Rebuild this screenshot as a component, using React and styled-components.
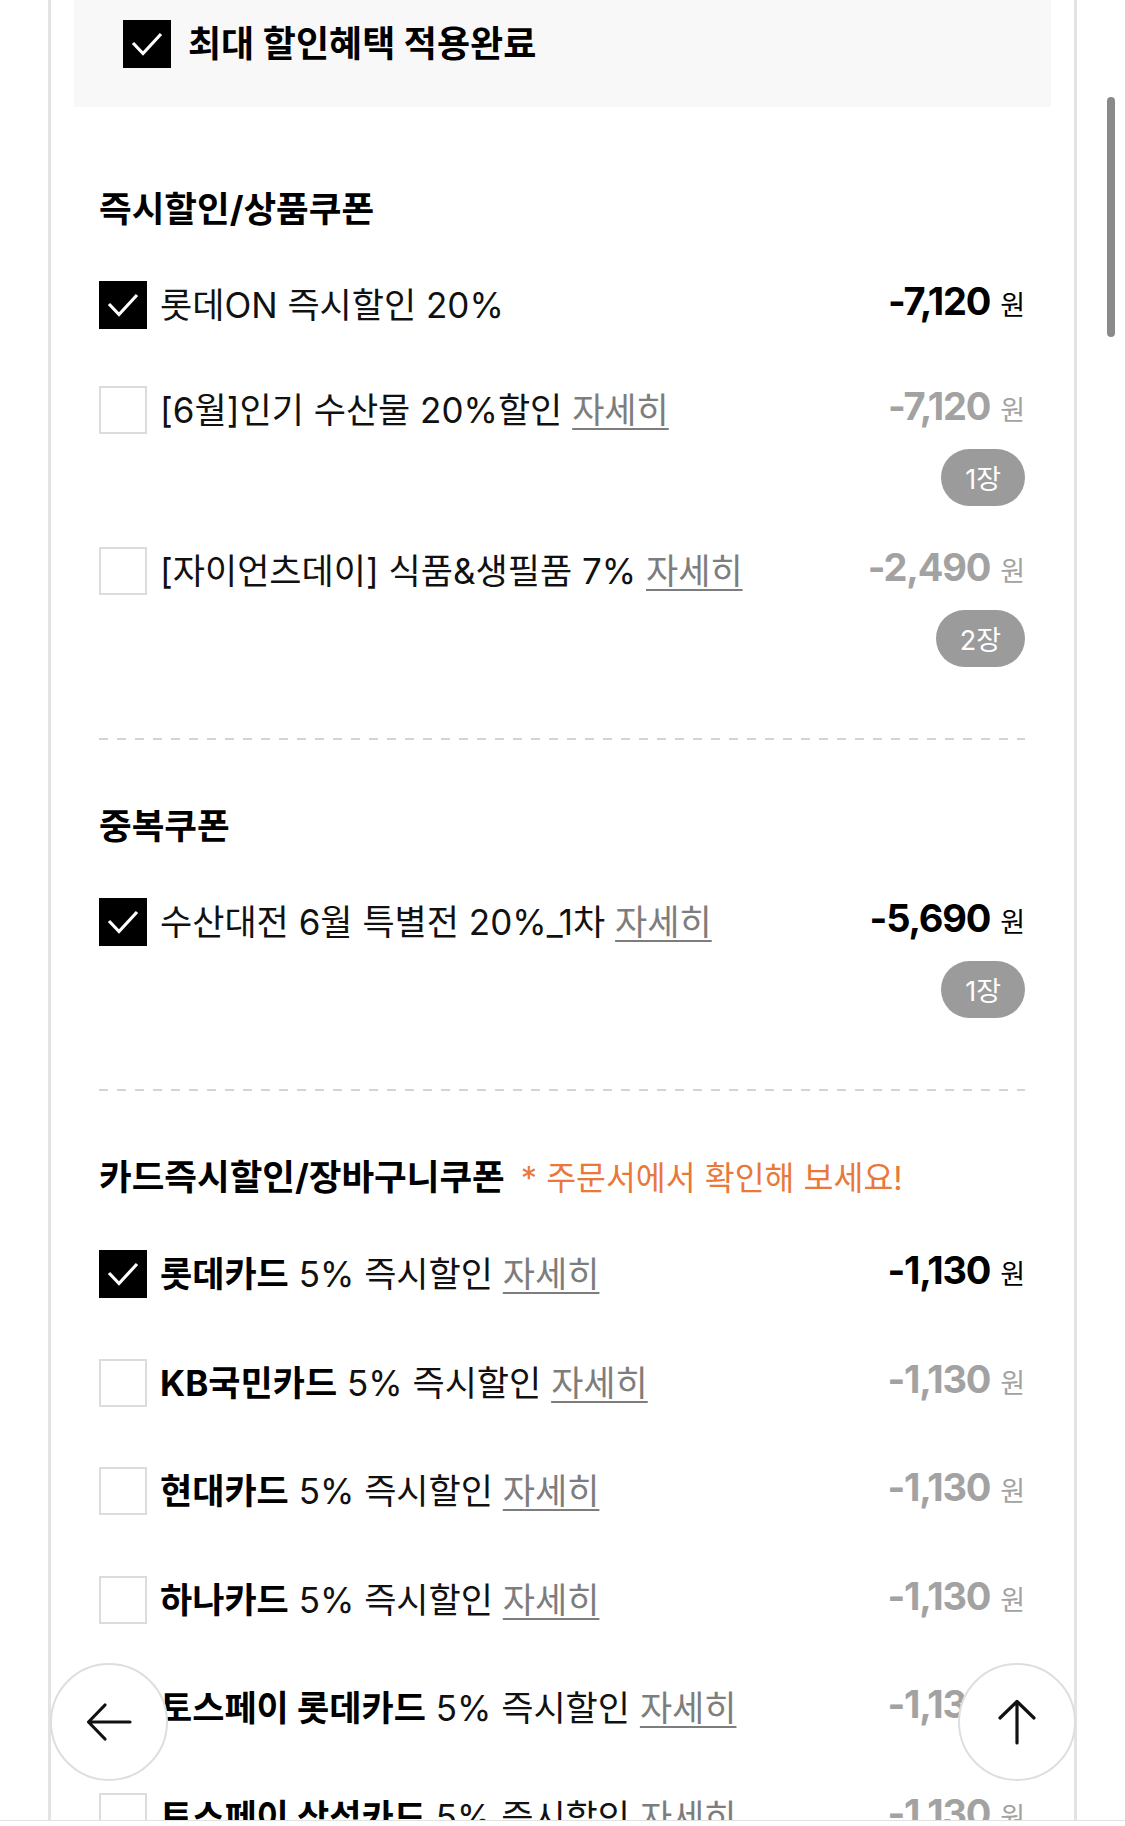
import React from "react";
import styled, { createGlobalStyle } from "styled-components";

const GlobalStyle = createGlobalStyle`
  html, body {
    margin: 0;
    padding: 0;
    background: #fff;
  }
  body {
    font-family: Inter, "Noto Sans CJK KR", sans-serif;
    color: #111;
  }
  * { box-sizing: border-box; }
`;

const coupons = [
  { id: 1, checked: true, label: "롯데ON 즉시할인 20%", price: "-7,120" },
  { id: 2, label: "[6월]인기 수산물 20%할인", link: true, price: "-7,120", count: "1장" },
  { id: 3, label: "[자이언츠데이] 식품&생필품 7%", link: true, price: "-2,490", count: "2장" },
];

const doubleCoupons = [
  { id: 4, checked: true, label: "수산대전 6월 특별전 20%_1차", link: true, price: "-5,690", count: "1장" },
];

const cards = [
  { id: 5, checked: true, brand: "롯데카드" },
  { id: 6, brand: "KB국민카드" },
  { id: 7, brand: "현대카드" },
  { id: 8, brand: "하나카드" },
  { id: 9, brand: "토스페이 롯데카드" },
  { id: 10, brand: "토스페이 삼성카드" },
];

function Check({ checked }) {
  return (
    <CheckBox $checked={checked}>
      {checked && (
        <svg width="48" height="48" viewBox="0 0 48 48">
          <polyline points="10,23 20,33.5 38,14" fill="none" stroke="#fff" strokeWidth="3.2" />
        </svg>
      )}
    </CheckBox>
  );
}

function Amount({ value, active }) {
  return (
    <Price $active={active}>
      <Num>{value}</Num>
      <Won>원</Won>
    </Price>
  );
}

function CouponRow({ item }) {
  return (
    <Item>
      <MainLine>
        <Check checked={item.checked} />
        <Label>
          {item.brand && <Strong>{item.brand}</Strong>}
          {item.label}
          {item.link && (
            <>
              {" "}
              <More>자세히</More>
            </>
          )}
        </Label>
        <Amount value={item.price} active={item.checked} />
      </MainLine>
      {item.count && <Count>{item.count}</Count>}
    </Item>
  );
}

export default function App() {
  return (
    <>
      <GlobalStyle />
      <Viewport>
        <Panel>
          <MaxBenefit>
            <Check checked />
            <MaxTitle>최대 할인혜택 적용완료</MaxTitle>
          </MaxBenefit>

          <Section $top={79}>
            <SectionTitle>즉시할인/상품쿠폰</SectionTitle>
            <List $gap={57}>
              {coupons.map((c) => (
                <CouponRow key={c.id} item={c} />
              ))}
            </List>
          </Section>

          <Divider />

          <Section $top={63}>
            <SectionTitle>중복쿠폰</SectionTitle>
            <List $gap={57}>
              {doubleCoupons.map((c) => (
                <CouponRow key={c.id} item={c} />
              ))}
            </List>
          </Section>

          <Divider />

          <Section $top={63}>
            <SectionTitle>
              카드즉시할인/장바구니쿠폰
              <Notice>* 주문서에서 확인해 보세요!</Notice>
            </SectionTitle>
            <List $gap={60.5}>
              {cards.map((c) => (
                <CouponRow
                  key={c.id}
                  item={{
                    ...c,
                    label: " 5% 즉시할인",
                    link: true,
                    price: "-1,130",
                  }}
                />
              ))}
            </List>
          </Section>
        </Panel>

        <ScrollThumb />

        <RoundButton $side="left" aria-label="뒤로">
          <svg width="48" height="48" viewBox="0 0 48 48">
            <path d="M45 24H4M20 7L3.5 24L20 41" fill="none" stroke="#111" strokeWidth="3.2" strokeLinecap="round" strokeLinejoin="round" />
          </svg>
        </RoundButton>
        <RoundButton $side="right" aria-label="맨 위로">
          <svg width="48" height="48" viewBox="0 0 48 48">
            <path d="M24 45V4M7 20L24 3.5L41 20" fill="none" stroke="#111" strokeWidth="3.2" strokeLinecap="round" strokeLinejoin="round" />
          </svg>
        </RoundButton>
      </Viewport>
    </>
  );
}

const Viewport = styled.div`
  position: relative;
  height: 1821px;
  overflow: hidden;
  border-bottom: 1px solid #e2e2e2;
`;

const Panel = styled.div`
  width: 1029px;
  min-height: 100%;
  margin-left: 48px;
  border-left: 3px solid #e3e3e3;
  border-right: 3px solid #e3e3e3;
`;

const MaxBenefit = styled.div`
  display: flex;
  align-items: flex-start;
  gap: 17px;
  height: 107px;
  margin: 0 23px;
  padding: 20px 0 0 49px;
  background: #f8f8f8;
`;

const MaxTitle = styled.div`
  font-size: 36px;
  font-weight: 700;
  line-height: 48px;
  color: #000;
`;

const Section = styled.section`
  padding: ${(p) => p.$top}px 49px 87px 48px;
`;

const SectionTitle = styled.h2`
  margin: 0 0 47px;
  font-size: 35.5px;
  font-weight: 700;
  line-height: 48px;
  color: #000;
  white-space: nowrap;
`;

const Notice = styled.span`
  margin-left: 16px;
  font-size: 32.5px;
  font-weight: 400;
  color: #e8793a;
`;

const Divider = styled.div`
  height: 2px;
  margin: 0 49px 0 48px;
  background: repeating-linear-gradient(to right, #d4d4d4 0 9px, transparent 9px 18px);
`;

const List = styled.div`
  display: flex;
  flex-direction: column;
  gap: ${(p) => p.$gap}px;
`;

const Item = styled.div`
  display: flex;
  flex-direction: column;
`;

const MainLine = styled.div`
  display: flex;
  align-items: center;
  height: 48px;
`;

const CheckBox = styled.span`
  flex: none;
  width: 48px;
  height: 48px;
  display: flex;
  background: ${(p) => (p.$checked ? "#000" : "#fff")};
  border: ${(p) => (p.$checked ? "none" : "2px solid #dcdcdc")};

  svg {
    display: block;
  }
`;

const Label = styled.div`
  flex: 1;
  min-width: 0;
  margin-left: 13px;
  font-size: 35px;
  line-height: 48px;
  color: #111;
  white-space: nowrap;
`;

const Strong = styled.b`
  font-weight: 700;
  color: #000;
`;

const More = styled.span`
  color: #7d7d7d;
  text-decoration: underline;
  text-decoration-thickness: 2px;
  text-underline-offset: 5px;
`;

const Price = styled.div`
  flex: none;
  white-space: nowrap;
  line-height: 48px;
  color: ${(p) => (p.$active ? "#000" : "#a2a2a2")};
`;

const Num = styled.span`
  font-size: 38px;
  font-weight: 700;
  letter-spacing: -1.2px;
`;

const Won = styled.span`
  margin-left: 10px;
  font-size: 27px;
  font-weight: 400;
  font-family: "Noto Sans CJK KR", sans-serif;
`;

const Count = styled.span`
  align-self: flex-end;
  display: inline-flex;
  align-items: center;
  height: 57px;
  margin-top: 15px;
  margin-bottom: -16px;
  padding: 0 24px;
  border-radius: 29px;
  background: #9b9b9b;
  color: #fff;
  font-size: 27px;
`;

const ScrollThumb = styled.div`
  position: absolute;
  left: 1107px;
  top: 97px;
  width: 8px;
  height: 240px;
  border-radius: 4px;
  background: #8a8a8a;
`;

const RoundButton = styled.button`
  position: absolute;
  top: 1663px;
  left: ${(p) => (p.$side === "left" ? "50px" : "958px")};
  width: 118px;
  height: 118px;
  padding: 0;
  display: flex;
  align-items: center;
  justify-content: center;
  border: 2px solid #dedede;
  border-radius: 50%;
  background: #fff;
  cursor: pointer;
`;
